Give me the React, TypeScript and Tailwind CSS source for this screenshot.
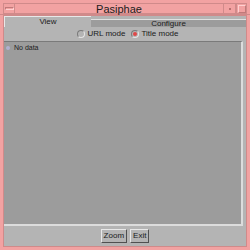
import React from "react";

const font = { fontFamily: '"Liberation Sans", Arial, sans-serif' };

function Radio({ checked }: { checked?: boolean }) {
  return (
    <span className="w-[8px] h-[8px] rounded-full border border-t-[#7a7a7a] border-l-[#7a7a7a] border-b-[#e6e6e6] border-r-[#e6e6e6] bg-[#b4b4b4] flex items-center justify-center">
      {checked && <span className="w-[4px] h-[4px] rounded-full bg-[#e04848]" />}
    </span>
  );
}

function Btn({ label }: { label: string }) {
  return (
    <button className="h-[14px] px-[2px] text-[8px] leading-none text-[#202020] bg-[#b4b4b4] border border-t-[#e8e8e8] border-l-[#e8e8e8] border-b-[#505050] border-r-[#505050]">
      {label}
    </button>
  );
}

export default function App() {
  return (
    <div className="w-[250px] h-[250px] bg-[#f2a2a2] flex flex-col" style={font}>
      {/* title bar */}
      <div className="h-[15px] flex items-stretch pl-[3px] pr-[3px] pt-[3px] border-b border-[#d08a8a]">
        <div className="w-[12px] h-[11px] border border-[#d08a8a] flex items-center justify-center">
          <span className="w-[9px] h-[3px] border border-t-[#c07a7a] border-l-[#c07a7a] border-b-[#ffd0d0] border-r-[#ffd0d0]" />
        </div>
        <div className="flex-1 text-center text-[11px] leading-[10px] text-[#202020] border-y border-[#d08a8a]">Pasiphae</div>
        <div className="w-[13px] h-[11px] border border-[#d08a8a] flex items-center justify-center">
          <span className="w-[2px] h-[2px] bg-[#b87070]" />
        </div>
        <div className="w-[11px] h-[11px] border border-[#d08a8a] flex items-center justify-center">
          <span className="w-[8px] h-[8px] border border-t-[#ffd0d0] border-l-[#ffd0d0] border-b-[#c07a7a] border-r-[#c07a7a]" />
        </div>
      </div>

      {/* body */}
      <div className="flex-1 mx-[3px] mb-[3px] bg-[#b4b4b4] flex flex-col border border-[#d08a8a]">
        <div className="h-[11px] flex items-end text-[8px] leading-none text-[#202020]">
          <div className="w-[87px] h-[11px] flex items-center justify-center border-t border-l border-[#e8e8e8]">View</div>
          <div className="flex-1 h-[8px] bg-[#9c9c9c] border-t border-[#e0e0e0] flex items-center justify-center">Configure</div>
        </div>
        <div className="h-[14px] flex items-center justify-center gap-[6px] text-[8px] text-[#202020] pl-[6px]">
          <span className="flex items-center gap-[2px]"><Radio />URL mode</span>
          <span className="flex items-center gap-[2px]"><Radio checked />Title mode</span>
        </div>
        <div className="flex-1 mr-[3px] bg-[#9c9c9c] border-t border-[#7a7a7a] border-b-2 border-b-[#dcdcdc] border-r-2 border-r-[#dcdcdc]">
          <div className="flex items-center gap-[4px] pl-[2px] pt-[1px] text-[7px] leading-[9px] text-[#202020]">
            <span className="w-[4px] h-[4px] rounded-full bg-[#b0b0d0]" />
            No data
          </div>
        </div>
        <div className="h-[20px] flex items-center justify-center gap-[3px]">
          <Btn label="Zoom" />
          <Btn label="Exit" />
        </div>
      </div>
    </div>
  );
}
